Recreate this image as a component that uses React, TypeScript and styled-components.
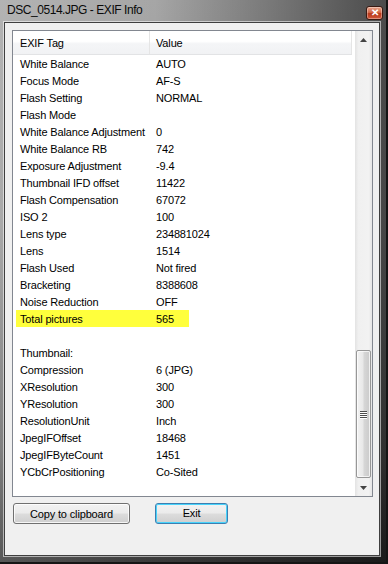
import React from "react";
import styled, { createGlobalStyle } from "styled-components";

const GlobalStyle = createGlobalStyle`
  html, body {
    margin: 0;
    padding: 0;
    width: 388px;
    height: 564px;
    overflow: hidden;
    background: #1e1e1e;
  }
  * {
    box-sizing: border-box;
  }
`;

const Window = styled.div`
  width: 388px;
  height: 564px;
  display: flex;
  flex-direction: column;
  padding: 0 6px 6px 4px;
  background:
    linear-gradient(90deg, rgba(255, 255, 255, 0.15) 0%, rgba(0, 0, 0, 0) 40%, rgba(0, 0, 0, 0.55) 100%),
    linear-gradient(180deg, #a6a6a6 0%, #9a9a9a 40%, #6a6a6a 80%, #3a3a3a 100%);
  border-right: 2px solid #151515;
  border-bottom: 2px solid #151515;
  font-family: "Liberation Sans", Arial, sans-serif;
`;

const TitleBar = styled.div`
  height: 22px;
  flex: none;
  display: flex;
  align-items: center;
  justify-content: space-between;
  padding: 0 0 0 3px;
`;

const Title = styled.span`
  font-size: 12px;
  letter-spacing: -0.45px;
  color: #0a0a0a;
  margin-top: -2px;
`;

const CloseButton = styled.div`
  width: 17px;
  height: 14px;
  margin: 4px -3px 0 0;
  border: 1px solid #3a1a12;
  border-radius: 3px;
  background: linear-gradient(180deg, #e8a58c 0%, #d2694a 45%, #b8381a 55%, #d0583a 100%);
  display: flex;
  align-items: center;
  justify-content: center;
  color: #fff;
  font-size: 10px;
  font-weight: bold;
  line-height: 1;
  box-shadow: inset 0 0 0 1px rgba(255, 255, 255, 0.35);
`;

const Client = styled.div`
  flex: 1;
  display: flex;
  flex-direction: column;
  background: #f0f0f0;
  border: 1px solid #3f3f3f;
  box-shadow: 0 0 0 1px rgba(255, 255, 255, 0.55);
  padding: 7px 6px 0 7px;
`;

const ListBox = styled.div`
  height: 467px;
  display: flex;
  border: 1px solid #828790;
  background: #ffffff;
  overflow: hidden;
`;

const ListContent = styled.div`
  flex: 1;
  display: flex;
  flex-direction: column;
  font-size: 11px;
  letter-spacing: -0.15px;
  color: #000;
`;

const Header = styled.div`
  height: 24px;
  flex: none;
  display: flex;
  align-items: center;
  background: linear-gradient(180deg, #ffffff 0%, #ffffff 45%, #f4f5f7 55%, #f1f2f4 100%);
  border-bottom: 1px solid #e2e3e5;
  margin-right: 3px;
`;

const HeaderCell = styled.div<{ $width?: number }>`
  height: 100%;
  display: flex;
  align-items: center;
  padding-left: ${(p) => (p.$width ? 7 : 6)}px;
  width: ${(p) => (p.$width ? `${p.$width}px` : "auto")};
  flex: ${(p) => (p.$width ? "none" : "1")};
  border-right: 1px solid #e5e5e5;
`;

const Row = styled.div<{ $highlight?: boolean }>`
  height: 17px;
  flex: none;
  display: flex;
  align-items: center;
  background: ${(p) =>
    p.$highlight
      ? "linear-gradient(#ffff3c, #ffff3c) no-repeat 3px 50% / 173px 21px"
      : "transparent"};
`;

const TagCell = styled.div`
  width: 137px;
  flex: none;
  padding-left: 7px;
  white-space: nowrap;
`;

const ValueCell = styled.div`
  flex: 1;
  padding-left: 6px;
  white-space: nowrap;
`;

const ScrollBar = styled.div`
  width: 17px;
  flex: none;
  display: flex;
  flex-direction: column;
  background: linear-gradient(90deg, #e3e3e3 0%, #f0f0f0 20%, #f2f2f2 80%, #e6e6e6 100%);
`;

const ArrowButton = styled.div`
  height: 17px;
  flex: none;
  display: flex;
  align-items: center;
  justify-content: center;
`;

const Track = styled.div`
  flex: 1;
  display: flex;
  flex-direction: column;
  justify-content: flex-end;
  padding: 0 0 1px 0;
`;

const Thumb = styled.div`
  height: 128px;
  margin: 0 1px;
  border: 1px solid #979797;
  border-radius: 2px;
  background: linear-gradient(90deg, #f2f2f2 0%, #e8e8e8 45%, #d6d6d6 55%, #cacaca 100%);
  box-shadow: inset 0 0 0 1px rgba(255, 255, 255, 0.7);
  display: flex;
  align-items: center;
  justify-content: center;
`;

const Grip = styled.div`
  width: 7px;
  display: flex;
  flex-direction: column;
  gap: 1px;
`;

const GripLine = styled.div`
  height: 1px;
  background: #4d4d4d;
  box-shadow: 0 1px 0 #ffffff;
`;

const ButtonRow = styled.div`
  display: flex;
  align-items: center;
  gap: 25px;
  padding: 6px 0 0 1px;
`;

const Button = styled.button<{ $width: number; $focused?: boolean }>`
  width: ${(p) => p.$width}px;
  height: 21px;
  border: 1px solid ${(p) => (p.$focused ? "#3c7fb1" : "#707070")};
  border-radius: 3px;
  background: linear-gradient(180deg, #f2f2f2 0%, #ebebeb 49%, #dddddd 51%, #cfcfcf 100%);
  box-shadow: inset 0 0 0 1px ${(p) => (p.$focused ? "#48d3fb" : "rgba(255, 255, 255, 0.8)")};
  font-family: "Liberation Sans", Arial, sans-serif;
  font-size: 11px;
  letter-spacing: -0.15px;
  color: #000;
  padding: 0;
  margin-top: ${(p) => (p.$focused ? "-1px" : "0")};
`;

const rows: [string, string][] = [
  ["White Balance", "AUTO"],
  ["Focus Mode", "AF-S"],
  ["Flash Setting", "NORMAL"],
  ["Flash Mode", ""],
  ["White Balance Adjustment", "0"],
  ["White Balance RB", "742"],
  ["Exposure Adjustment", "-9.4"],
  ["Thumbnail IFD offset", "11422"],
  ["Flash Compensation", "67072"],
  ["ISO 2", "100"],
  ["Lens type", "234881024"],
  ["Lens", "1514"],
  ["Flash Used", "Not fired"],
  ["Bracketing", "8388608"],
  ["Noise Reduction", "OFF"],
  ["Total pictures", "565"],
  ["", ""],
  ["Thumbnail:", ""],
  ["Compression", "6 (JPG)"],
  ["XResolution", "300"],
  ["YResolution", "300"],
  ["ResolutionUnit", "Inch"],
  ["JpegIFOffset", "18468"],
  ["JpegIFByteCount", "1451"],
  ["YCbCrPositioning", "Co-Sited"],
];

const Arrow = ({ up }: { up?: boolean }) => (
  <svg width="7" height="4" viewBox="0 0 7 4">
    <polygon points={up ? "3.5,0 7,4 0,4" : "0,0 7,0 3.5,4"} fill="#444" />
  </svg>
);

const App: React.FC = () => {
  return (
    <>
      <GlobalStyle />
      <Window>
        <TitleBar>
          <Title>DSC_0514.JPG - EXIF Info</Title>
          <CloseButton>✕</CloseButton>
        </TitleBar>
        <Client>
          <ListBox>
            <ListContent>
              <Header>
                <HeaderCell $width={137}>EXIF Tag</HeaderCell>
                <HeaderCell>Value</HeaderCell>
              </Header>
              {rows.map(([tag, value], i) => (
                <Row key={i} $highlight={tag === "Total pictures"}>
                  <TagCell>{tag}</TagCell>
                  <ValueCell>{value}</ValueCell>
                </Row>
              ))}
            </ListContent>
            <ScrollBar>
              <ArrowButton>
                <Arrow up />
              </ArrowButton>
              <Track>
                <Thumb>
                  <Grip>
                    <GripLine />
                    <GripLine />
                    <GripLine />
                    <GripLine />
                  </Grip>
                </Thumb>
              </Track>
              <ArrowButton>
                <Arrow />
              </ArrowButton>
            </ScrollBar>
          </ListBox>
          <ButtonRow>
            <Button $width={117}>Copy to clipboard</Button>
            <Button $width={73} $focused>
              Exit
            </Button>
          </ButtonRow>
        </Client>
      </Window>
    </>
  );
};

export default App;
